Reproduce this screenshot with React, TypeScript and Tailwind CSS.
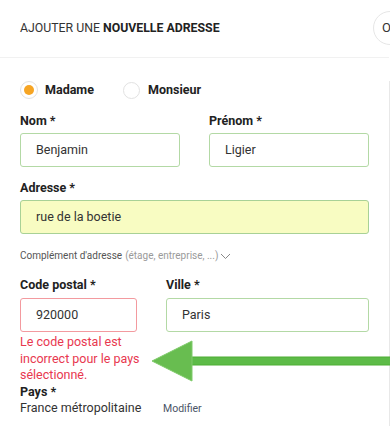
import React from "react";

export default function App() {
  const font = { fontFamily: "Roboto, 'Liberation Sans', Arial, sans-serif" };
  return (
    <div className="relative w-[390px] h-[426px] overflow-hidden bg-white text-[#222]" style={font}>
      {/* Header */}
      <div className="h-[58px] flex items-center px-5 border-b border-[#f1f1f1] mr-[1px]">
        <div className="text-[12.3px] text-[#333]">
          AJOUTER UNE <span className="font-bold text-[#222]">NOUVELLE ADRESSE</span>
        </div>
      </div>
      <div className="absolute left-[373px] top-[11px] w-[34px] h-[34px] rounded-full border border-[#e6e6e6] bg-white flex items-center pl-[8px] text-[13px] text-[#333]">
        O
      </div>

      {/* Body */}
      <div className="border-r border-[#e8e8e8] h-[368px] px-5">
        {/* Radios */}
        <div className="flex items-center h-[18px] mt-[23px]">
          <div className="flex items-center">
            <div className="w-[18px] h-[18px] rounded-full border border-[#e2e2e2] flex items-center justify-center">
              <div className="w-[10px] h-[10px] rounded-full bg-[#f6a524]" />
            </div>
            <span className="ml-[7px] text-[12.5px] font-bold">Madame</span>
          </div>
          <div className="flex items-center ml-[29px]">
            <div className="w-[17px] h-[17px] rounded-full border border-[#e2e2e2]" />
            <span className="ml-[8px] text-[12.5px] font-bold">Monsieur</span>
          </div>
        </div>

        {/* Nom / Prenom */}
        <div className="flex mt-[14px]">
          <div className="w-[160px]">
            <div className="h-[16px] leading-[16px] text-[12.5px] font-bold">Nom *</div>
            <div className="mt-[4px] h-[34px] rounded-[3px] border border-[#b3d9a5] flex items-center pl-[15px] text-[12.5px] text-[#333]">
              Benjamin
            </div>
          </div>
          <div className="w-[160px] ml-[29px]">
            <div className="h-[16px] leading-[16px] text-[12.5px] font-bold">Prénom *</div>
            <div className="mt-[4px] h-[34px] rounded-[3px] border border-[#b3d9a5] flex items-center pl-[15px] text-[12.5px] text-[#333]">
              Ligier
            </div>
          </div>
        </div>

        {/* Adresse */}
        <div className="mt-[13px] w-[349px]">
          <div className="h-[16px] leading-[16px] text-[12.5px] font-bold">Adresse *</div>
          <div className="mt-[4px] h-[34px] rounded-[3px] border border-[#a8d196] bg-[#f8fcc2] flex items-center pl-[15px] text-[12.5px] text-[#333]">
            rue de la boetie
          </div>
        </div>

        {/* Complement */}
        <div className="mt-[15px] h-[14px] flex items-center text-[10px] leading-[14px]">
          <span className="text-[#555]">Complément d'adresse</span>
          <span className="ml-[3px] text-[#9a9a9a]">(étage, entreprise, ...)</span>
          <svg className="ml-[2px]" width="11" height="7" viewBox="0 0 11 7" fill="none">
            <path d="M1 1l4.5 4.5L10 1" stroke="#888" strokeWidth="1" />
          </svg>
        </div>

        {/* Code postal / Ville */}
        <div className="flex mt-[14px]">
          <div className="w-[117px]">
            <div className="h-[16px] leading-[16px] text-[12.5px] font-bold">Code postal *</div>
            <div className="mt-[5px] h-[34px] rounded-[3px] border border-[#f39a9f] flex items-center pl-[15px] text-[12.5px] text-[#333]">
              920000
            </div>
            <div className="mt-[2px] text-[12.5px] leading-[16.5px] text-[#e8384f] w-[130px]">
              Le code postal est incorrect pour le pays sélectionné.
            </div>
          </div>
          <div className="w-[203px] ml-[29px]">
            <div className="h-[16px] leading-[16px] text-[12.5px] font-bold">Ville *</div>
            <div className="mt-[5px] h-[34px] rounded-[3px] border border-[#b3d9a5] flex items-center pl-[15px] text-[12.5px] text-[#333]">
              Paris
            </div>
          </div>
        </div>

        {/* Pays */}
        <div className="h-[16px] leading-[16px] text-[12.5px] font-bold">Pays *</div>
        <div className="flex items-center h-[18px]">
          <span className="text-[12.5px] text-[#333] w-[143px]">France métropolitaine</span>
          <span className="text-[10.5px] text-[#4a5466]">Modifier</span>
        </div>
      </div>

      {/* Green arrow annotation */}
      <svg className="absolute left-[150px] top-[339px]" width="240" height="45" viewBox="0 0 240 45">
        <rect x="40" y="18" width="202" height="8" fill="#5dbb48" stroke="#4fae35" strokeWidth="1" />
        <polygon points="2,22 42,2 42,42" fill="#68bd50" stroke="#7fcb6a" strokeWidth="1" />
      </svg>
    </div>
  );
}
